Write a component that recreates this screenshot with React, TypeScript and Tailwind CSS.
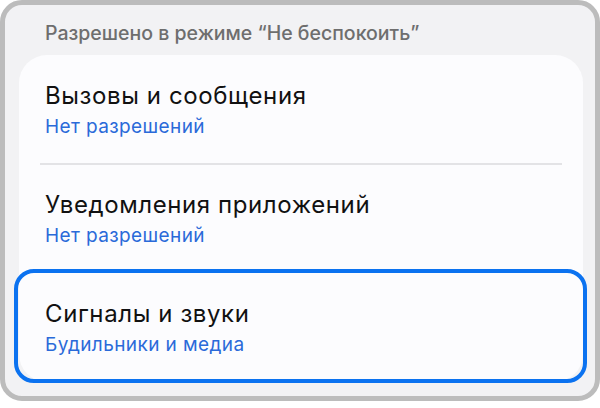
import React from "react";

const font = { fontFamily: "Inter, Roboto, 'Noto Sans', sans-serif" };

function Row({ title, sub }: { title: string; sub: string }) {
  return (
    <div className="h-[109px] px-[26px] pt-[25px]">
      <div className="text-[24px] leading-[32px] tracking-[0.6px] text-[#111111]">{title}</div>
      <div className="mt-[3px] text-[19px] leading-[24px] tracking-[0.4px] text-[#2a6ad9]">{sub}</div>
    </div>
  );
}

export default function App() {
  return (
    <div className="w-[600px] h-[408px] bg-white" style={font}>
      <div className="w-[600px] h-[401px] rounded-[22px] border-[5px] border-[#bcbcbc] bg-[#f2f2f4] box-border">
        <div className="pl-[40px] pt-[16px] h-[50px] text-[19.5px] leading-[24px] font-medium text-[#6e6e6e]">
          Разрешено в режиме “Не беспокоить”
        </div>
        <div className="relative ml-[14px] w-[564px] rounded-[28px] bg-[#fcfcfe]">
          <Row title="Вызовы и сообщения" sub="Нет разрешений" />
          <div className="mx-[21px] h-[2px] bg-[#e3e3e6] -my-[1px] relative" />
          <Row title="Уведомления приложений" sub="Нет разрешений" />
          <div className="relative">
            <Row title="Сигналы и звуки" sub="Будильники и медиа" />
            <div className="absolute left-[-5px] right-[-4px] top-[-4px] bottom-[-1px] rounded-[20px] border-[4px] border-[#0b72f0]" />
          </div>
        </div>
      </div>
    </div>
  );
}
